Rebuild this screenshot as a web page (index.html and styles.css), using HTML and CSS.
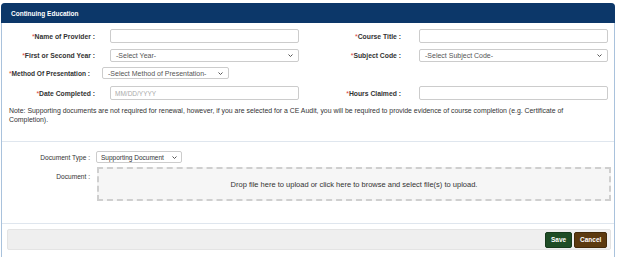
FILE: index.html
```html
<!DOCTYPE html>
<html lang="en">
<head>
    <meta charset="UTF-8">
    <title>Continuing Education</title>
    <link rel="stylesheet" href="styles.css">
</head>
<body>
    <div class="ce_panel">
        <div class="ce_heading">Continuing Education</div>
        <div class="ce_body">
            <form>
                <div class="ce_row ce_rowTall">
                    <label class="ce_label ce_labelLeft"><span class="ce_req">*</span>Name of Provider :</label>
                    <input type="text" class="ce_input">
                    <label class="ce_label ce_labelRight"><span class="ce_req">*</span>Course Title :</label>
                    <input type="text" class="ce_input">
                </div>
                <div class="ce_row">
                    <label class="ce_label ce_labelLeft"><span class="ce_req">*</span>First or Second Year :</label>
                    <div class="ce_select ce_selectWide">
                        <span>-Select Year-</span>
                        <svg class="ce_arrow" viewBox="0 0 10 6"><path d="M1 1l4 4 4-4" fill="none" stroke="#555" stroke-width="2"/></svg>
                    </div>
                    <label class="ce_label ce_labelRight"><span class="ce_req">*</span>Subject Code :</label>
                    <div class="ce_select ce_selectWide">
                        <span>-Select Subject Code-</span>
                        <svg class="ce_arrow" viewBox="0 0 10 6"><path d="M1 1l4 4 4-4" fill="none" stroke="#555" stroke-width="2"/></svg>
                    </div>
                </div>
                <div class="ce_row ce_rowMethod">
                    <label class="ce_label ce_labelMethod"><span class="ce_req">*</span>Method Of Presentation :</label>
                    <div class="ce_select ce_selectMethod">
                        <span>-Select Method of Presentation-</span>
                        <svg class="ce_arrow" viewBox="0 0 10 6"><path d="M1 1l4 4 4-4" fill="none" stroke="#555" stroke-width="2"/></svg>
                    </div>
                </div>
                <div class="ce_row ce_rowTall">
                    <label class="ce_label ce_labelLeft"><span class="ce_req">*</span>Date Completed :</label>
                    <input type="text" class="ce_input" placeholder="MM/DD/YYYY">
                    <label class="ce_label ce_labelRight"><span class="ce_req">*</span>Hours Claimed :</label>
                    <input type="text" class="ce_input">
                </div>
                <p class="ce_note">Note: Supporting documents are not required for renewal, however, if you are selected for a CE Audit, you will be required to provide evidence of course completion (e.g. Certificate of Completion).</p>
            </form>
        </div>
        <div class="ce_docs">
            <div class="ce_docRow">
                <span class="ce_docLabel">Document Type :</span>
                <div class="ce_select ce_selectDoc">
                    <span>Supporting Document</span>
                    <svg class="ce_arrow" viewBox="0 0 10 6"><path d="M1 1l4 4 4-4" fill="none" stroke="#555" stroke-width="2"/></svg>
                </div>
            </div>
            <div class="ce_docRow ce_docRowTop">
                <span class="ce_docLabel ce_docLabelTop">Document :</span>
                <div class="ce_drop">Drop file here to upload or click here to browse and select file(s) to upload.</div>
            </div>
        </div>
        <div class="ce_footer">
            <button type="button" class="ce_btn ce_btnSave">Save</button>
            <button type="button" class="ce_btn ce_btnCancel">Cancel</button>
        </div>
    </div>
</body>
</html>
```

FILE: styles.css
```css
body{
    margin: 0;
    background: #ffffff;
    font-family: "Liberation Sans", Arial, sans-serif;
    color: #333333;
}
.ce_panel{
    margin: 3px 0 0 1px;
    width: 612px;
    height: 260px;
    border: 1px solid #a9c2dc;
    border-bottom: none;
    border-radius: 4px 4px 0 0;
}
.ce_heading{
    height: 20px;
    margin: -1px -1px 0 -1px;
    padding-left: 10px;
    display: flex;
    align-items: center;
    background: #0c3769;
    color: #ffffff;
    font-size: 6.5px;
    font-weight: bold;
    border-radius: 4px 4px 0 0;
}
.ce_body{
    padding-top: 6px;
    border-bottom: 1px solid #dfe6ee;
}
.ce_row{
    display: flex;
    align-items: center;
    height: 13px;
    margin-bottom: 5px;
}
.ce_rowTall{
    height: 14px;
    margin-bottom: 6px;
}
.ce_rowMethod{
    height: 12px;
    margin-bottom: 7px;
}
.ce_label{
    font-size: 6.8px;
    font-weight: bold;
    text-align: right;
    flex-shrink: 0;
}
.ce_req{
    color: #d9413b;
    font-weight: normal;
}
.ce_labelLeft{
    width: 93px;
    margin-right: 15px;
}
.ce_labelRight{
    width: 102px;
    margin-right: 18px;
}
.ce_labelMethod{
    margin-left: 7px;
    margin-right: 12px;
    text-align: left;
    font-size: 6.6px;
}
.ce_input{
    box-sizing: border-box;
    width: 189px;
    height: 100%;
    margin: 0;
    padding: 0 4px;
    border: 1px solid #cccccc;
    border-radius: 2px;
    font-family: inherit;
    font-size: 6.5px;
    outline: none;
}
.ce_input::placeholder{
    color: #aaaaaa;
}
.ce_select{
    box-sizing: border-box;
    height: 100%;
    flex-shrink: 0;
    display: flex;
    align-items: center;
    justify-content: space-between;
    padding: 0 5px;
    border: 1px solid #cccccc;
    border-radius: 2px;
    background: #ffffff;
    color: #555555;
    font-size: 7px;
    cursor: default;
}
.ce_arrow{
    width: 5px;
    height: 3px;
    flex-shrink: 0;
}
.ce_selectWide{
    width: 189px;
}
.ce_selectMethod{
    width: 127px;
}
.ce_note{
    margin: 6px 0 0 0;
    padding: 0 35px 17px 7px;
    font-size: 6.9px;
    line-height: 9px;
}
.ce_docs{
    padding: 9px 0 22px 0;
    border-bottom: 1px solid #dfe6ee;
}
.ce_docRow{
    display: flex;
    align-items: center;
    margin-bottom: 4px;
}
.ce_docRowTop{
    align-items: flex-start;
    margin-bottom: 0;
}
.ce_docLabel{
    width: 88px;
    margin-right: 6px;
    text-align: right;
    font-size: 6.6px;
    flex-shrink: 0;
}
.ce_docLabelTop{
    margin-top: 6px;
    margin-right: 7px;
}
.ce_selectDoc{
    width: 86px;
    height: 12px;
    padding: 0 4px;
    font-size: 6.5px;
    color: #333333;
}
.ce_drop{
    box-sizing: border-box;
    width: 514px;
    height: 34px;
    display: flex;
    align-items: center;
    justify-content: center;
    border: 2px dashed #cfcfcf;
    background: #f6f6f6;
    font-size: 7.5px;
    color: #333333;
}
.ce_footer{
    margin: 5px 3px 0 5px;
    height: 21px;
    box-sizing: border-box;
    display: flex;
    align-items: center;
    justify-content: flex-end;
    gap: 2px;
    padding-right: 3px;
    background: #efefef;
    border: 1px solid #e4e4e4;
    border-radius: 2px;
}
.ce_btn{
    height: 16px;
    padding: 0 5px;
    border-radius: 2px;
    color: #ffffff;
    font-family: inherit;
    font-size: 6.5px;
    font-weight: bold;
}
.ce_btnSave{
    width: 27px;
    background: #1f4d26;
    border: 1px solid #173a1c;
}
.ce_btnCancel{
    width: 33px;
    background: #5c3a10;
    border: 1px solid #432a0a;
}
```
